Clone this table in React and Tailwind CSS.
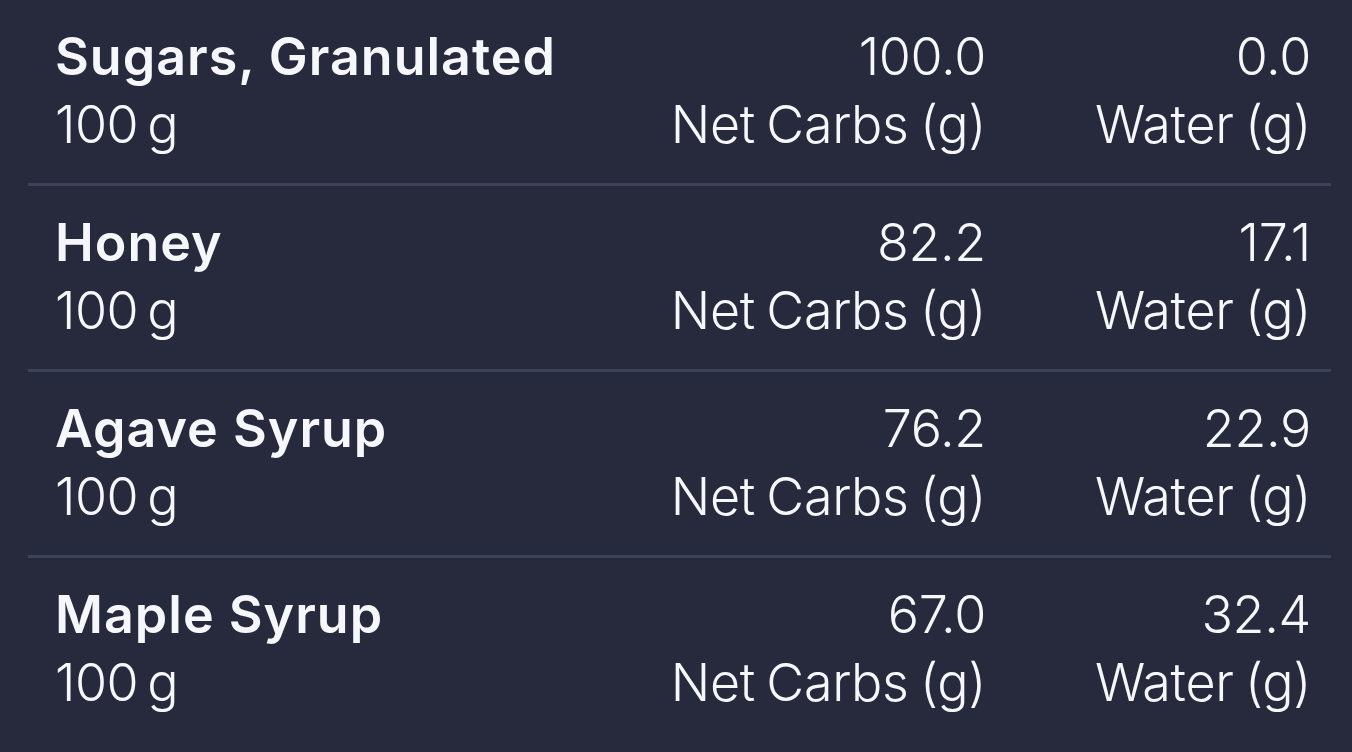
import React from "react";

const rows = [
  { name: "Sugars, Granulated", carbs: "100.0", water: "0.0" },
  { name: "Honey", carbs: "82.2", water: "17.1" },
  { name: "Agave Syrup", carbs: "76.2", water: "22.9" },
  { name: "Maple Syrup", carbs: "67.0", water: "32.4" },
];

export default function App() {
  return (
    <div
      className="w-[1352px] h-[752px] bg-[#272a3d] text-[#f6f7fb] overflow-hidden"
      style={{ fontFamily: "Inter, 'Noto Sans', sans-serif" }}
    >
      <div className="ml-[28px] mr-[21px] flex flex-col">
        {rows.map((r, i) => (
          <div
            key={r.name}
            className={
              "flex pl-[27px] pr-[20px] pt-[23px] pb-[24px] text-[52px] leading-[68px] " +
              (i < rows.length - 1 ? "border-b-[3px] border-[#3e4256]" : "")
            }
          >
            <div className="flex-1 flex flex-col">
              <div className="font-semibold tracking-[1px]">{r.name}</div>
              <div className="font-light tracking-[-0.5px] [word-spacing:-5px]">100 g</div>
            </div>
            <div className="flex flex-col items-end font-light tracking-[-0.3px] [word-spacing:-3px]">
              <div>{r.carbs}</div>
              <div>Net Carbs (g)</div>
            </div>
            <div className="w-[325px] flex flex-col items-end font-light tracking-[-0.3px] [word-spacing:-3px]">
              <div>{r.water}</div>
              <div>Water (g)</div>
            </div>
          </div>
        ))}
      </div>
    </div>
  );
}
